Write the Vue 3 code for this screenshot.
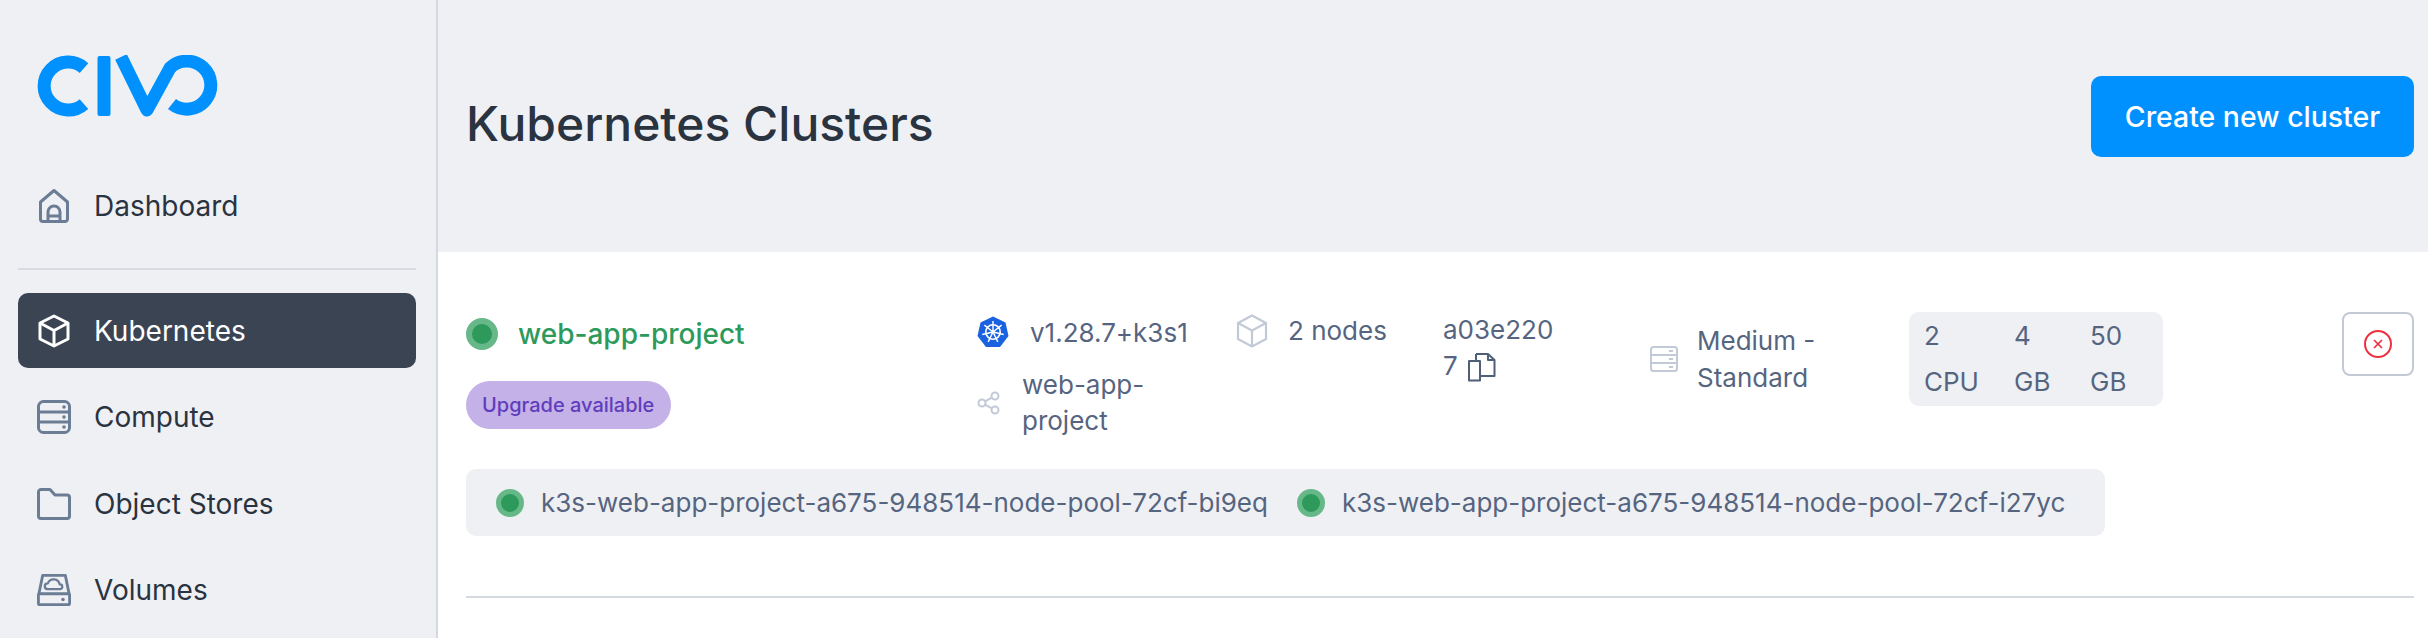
<template>
  <div class="page">
    <aside class="sidebar">
      <div class="logo">
        <svg width="182" height="62" viewBox="37 55 182 62" fill="none" stroke="#0091ff" stroke-width="13">
          <path d="M84 68 A24 24 0 1 0 84 104" />
          <rect x="97.5" y="56" width="13" height="60" rx="2" fill="#0091ff" stroke="none" />
          <path d="M121 57 L147 110 L170 68 A24 24 0 1 1 172 104" stroke-linejoin="round" />
        </svg>
      </div>

      <a class="nav-item">
        <svg class="nav-icon" viewBox="0 0 30 34" fill="none" stroke="#6b7c95" stroke-width="3" stroke-linejoin="round">
          <path d="M1.5 13 L15 1.5 L28.5 13 V30 a2.5 2.5 0 0 1 -2.5 2.5 H4 a2.5 2.5 0 0 1 -2.5 -2.5 Z" />
          <path d="M9 32 V23 a6 6 0 0 1 12 0 V32 M9 27 H21" />
        </svg>
        <span>Dashboard</span>
      </a>

      <div class="nav-divider"></div>

      <a class="nav-item active">
        <svg class="nav-icon" viewBox="0 0 32 34" fill="none" stroke="#fff" stroke-width="3" stroke-linejoin="round">
          <path d="M16 2 L30 9 V25 L16 32 L2 25 V9 Z" />
          <path d="M2 9 L16 16.5 L30 9 M16 16.5 V32" />
        </svg>
        <span>Kubernetes</span>
      </a>
      <a class="nav-item">
        <svg class="nav-icon" viewBox="0 0 34 34" fill="none" stroke="#6b7c95" stroke-width="3">
          <rect x="1.5" y="1.5" width="31" height="31" rx="5" />
          <path d="M1.5 12 H32.5 M1.5 22 H32.5" />
          <circle cx="27" cy="7" r="1.8" fill="#6b7c95" stroke="none" />
          <circle cx="27" cy="17" r="1.8" fill="#6b7c95" stroke="none" />
          <circle cx="27" cy="27" r="1.8" fill="#6b7c95" stroke="none" />
        </svg>
        <span>Compute</span>
      </a>
      <a class="nav-item">
        <svg class="nav-icon" viewBox="0 0 34 32" fill="none" stroke="#6b7c95" stroke-width="3" stroke-linejoin="round">
          <path d="M1.5 4 a2.5 2.5 0 0 1 2.5 -2.5 H13 L18 7 H30 a2.5 2.5 0 0 1 2.5 2.5 V28 a2.5 2.5 0 0 1 -2.5 2.5 H4 a2.5 2.5 0 0 1 -2.5 -2.5 Z" />
        </svg>
        <span>Object Stores</span>
      </a>
      <a class="nav-item">
        <svg class="nav-icon" viewBox="0 0 36 34" fill="none" stroke="#6b7c95" stroke-width="3" stroke-linejoin="round">
          <path d="M2 21 L6 1.5 H30 L34 21" />
          <rect x="1.5" y="21" width="33" height="11.5" rx="1.5" />
          <circle cx="27.5" cy="27" r="1.9" fill="#6b7c95" stroke="none" />
          <path d="M11 16 a3 3 0 0 1 0.5 -6 a6.5 6.5 0 0 1 12.5 1 a2.5 2.5 0 0 1 0.5 5 Z" stroke-width="2.4" />
        </svg>
        <span>Volumes</span>
      </a>
    </aside>

    <main class="main">
      <header class="header">
        <h1>Kubernetes Clusters</h1>
        <button class="btn-create">Create new cluster</button>
      </header>

      <section class="content">
        <div class="cluster-row">
          <div class="col-name">
            <div class="name-line">
              <span class="dot"></span>
              <span class="name">web-app-project</span>
            </div>
            <span class="badge">Upgrade available</span>
          </div>

          <div class="col-version">
            <div class="version-line">
              <svg width="32" height="32" viewBox="0 0 32 32">
                <polygon points="16,0.5 28.5,6.5 31.5,20 23,31 9,31 0.5,20 3.5,6.5" fill="#1a62e0" />
                <g fill="none" stroke="#fff">
                  <circle cx="16" cy="16" r="7.2" stroke-width="1.6" />
                  <circle cx="16" cy="16" r="1.6" fill="#fff" stroke="none" />
                  <path d="M16 16 V5 M16 16 L24.6 9.1 M16 16 L26.7 18.5 M16 16 L20.8 25.9 M16 16 L11.2 25.9 M16 16 L5.3 18.5 M16 16 L7.4 9.1" stroke-width="1.4" />
                </g>
              </svg>
              <span>v1.28.7+k3s1</span>
            </div>
            <div class="project-line">
              <svg width="24" height="24" viewBox="0 0 24 24" fill="none" stroke="#c3cad7" stroke-width="2">
                <circle cx="5" cy="12" r="3.5" />
                <circle cx="18" cy="5" r="3.5" />
                <circle cx="18" cy="19" r="3.5" />
                <path d="M8 10.3 L15 6.7 M8 13.7 L15 17.3" />
              </svg>
              <span class="project-text">web-app-project</span>
            </div>
          </div>

          <div class="col-nodes">
            <svg width="34" height="34" viewBox="0 0 34 34" fill="none" stroke="#c3cad7" stroke-width="2.2" stroke-linejoin="round">
              <path d="M17 1.5 L31 9 V25 L17 32.5 L3 25 V9 Z" />
              <path d="M3 9 L17 16.5 L31 9 M17 16.5 V32.5" />
            </svg>
            <span>2 nodes</span>
          </div>

          <div class="col-id">
            a03e2207
            <svg class="copy" width="30" height="30" viewBox="0 0 30 30" fill="none" stroke="#4f5f78" stroke-width="2" stroke-linejoin="round">
              <path d="M2 9 H13 V28.5 H2 Z" />
              <path d="M13 2 H21 L27.5 8 V24 H13 M21 2 V8 H27.5" />
              <path d="M9 2 H13 M9 2 V9" />
            </svg>
          </div>

          <div class="col-size">
            <svg width="28" height="26" viewBox="0 0 28 26" fill="none" stroke="#c3cad7" stroke-width="2">
              <rect x="1" y="1" width="26" height="24" rx="2.5" />
              <path d="M1 9 H27 M1 17 H27 M19 5 H23 M19 13 H23 M19 21 H23" />
            </svg>
            <span class="size-text">Medium - Standard</span>
          </div>

          <div class="col-specs">
            <div class="specs">
              <div class="spec spec-cpu"><span>2</span><span>CPU</span></div>
              <div class="spec spec-ram"><span>4</span><span>GB</span></div>
              <div class="spec"><span>50</span><span>GB</span></div>
            </div>
          </div>

          <button class="btn-delete">
            <svg width="30" height="30" viewBox="0 0 30 30" fill="none" stroke="#ee2f3f" stroke-width="2">
              <circle cx="15" cy="15" r="13" />
              <path d="M11 11 L19 19 M19 11 L11 19" stroke-width="1.7" />
            </svg>
          </button>
        </div>

        <div class="node-pool">
          <div class="node">
            <span class="dot dot-small"></span>
            <span>k3s-web-app-project-a675-948514-node-pool-72cf-bi9eq</span>
          </div>
          <div class="node">
            <span class="dot dot-small"></span>
            <span>k3s-web-app-project-a675-948514-node-pool-72cf-i27yc</span>
          </div>
        </div>

        <div class="row-divider"></div>
      </section>
    </main>
  </div>
</template>

<script setup>
</script>

<style>
html,
body {
  margin: 0;
  background: #fff;
}
</style>

<style scoped>
.page {
  display: flex;
  height: 638px;
  overflow: hidden;
  font-family: Inter, "Liberation Sans", sans-serif;
  color: #2a3340;
}

/* === Sidebar === */
.sidebar {
  flex-shrink: 0;
  box-sizing: border-box;
  background: #eff0f4;
  border-right: 2px solid #d6d8e0;
  width: 438px;
  padding: 55px 20px 0 18px;
}

.logo {
  height: 62px;
  padding-left: 19px;
  margin-bottom: 51px;
}

.nav-item {
  display: flex;
  align-items: center;
  height: 75px;
  padding-left: 19px;
  font-size: 28px;
  font-weight: 400;
  border-radius: 10px;
  margin-bottom: 11.5px;
}

.nav-icon {
  width: 34px;
  height: 34px;
  margin-right: 23px;
  flex-shrink: 0;
}

.nav-item.active {
  background: #3b4453;
  color: #fff;
}

.nav-divider {
  height: 2px;
  background: #d9dbe3;
  margin: 25px 0 23px;
}

/* === Main === */
.main {
  flex: 1;
  min-width: 0;
}

.header {
  height: 252px;
  box-sizing: border-box;
  background: #eff0f4;
  display: flex;
  align-items: flex-start;
  justify-content: space-between;
  padding: 76px 14px 0 28px;
}

.header h1 {
  margin: 16px 0 0;
  font-size: 48px;
  line-height: 64px;
  font-weight: 500;
  color: #2a3340;
}

.btn-create {
  width: 323px;
  height: 81px;
  background: #0091ff;
  color: #fff;
  border: 0;
  border-radius: 10px;
  font-family: inherit;
  font-size: 28.4px;
  font-weight: 500;
}

.content {
  padding: 60px 14px 0 28px;
  color: #56657f;
  font-size: 26px;
}

.cluster-row {
  display: grid;
  grid-template-columns: 511px 258px 208px 207px 259px 433px 72px;
  height: 157px;
}

/* === Columns === */
.name-line {
  display: flex;
  align-items: center;
  gap: 20px;
  height: 44px;
}

.dot {
  display: block;
  width: 20px;
  height: 20px;
  border-radius: 50%;
  background: #2d9a5b;
  border: 6px solid #66b888;
  flex-shrink: 0;
}

.dot-small {
  width: 18px;
  height: 18px;
  border-width: 5px;
}

.name {
  color: #2d9a5b;
  font-size: 28px;
  font-weight: 500;
}

.badge {
  display: inline-block;
  margin-top: 25px;
  height: 48px;
  line-height: 48px;
  padding: 0 17px 0 16px;
  border-radius: 24px;
  background: #c4b1e8;
  color: #5f3dbb;
  font-size: 20px;
  font-weight: 500;
}

.version-line {
  display: flex;
  align-items: center;
  gap: 21px;
  height: 36px;
  margin-top: 2px;
}

.project-line {
  display: flex;
  align-items: center;
  gap: 21px;
  margin-top: 17px;
}

.project-text {
  width: 150px;
  line-height: 36px;
}

.col-nodes {
  display: flex;
  align-items: flex-start;
  gap: 19px;
  line-height: 34px;
  padding-top: 2px;
}

.col-id {
  width: 120px;
  word-break: break-all;
  line-height: 36px;
}

.copy {
  vertical-align: -7px;
  margin-left: 2px;
}

.col-size {
  display: flex;
  align-items: center;
  align-self: start;
  gap: 19px;
  padding-top: 10px;
}

.size-text {
  width: 180px;
  line-height: 37px;
}

.specs {
  display: flex;
  width: 254px;
  height: 94px;
  box-sizing: border-box;
  background: #eff0f4;
  border-radius: 10px;
  padding: 0 15px;
}

.spec {
  display: flex;
  flex-direction: column;
  justify-content: center;
  gap: 8px;
  line-height: 38px;
}

.spec-cpu {
  width: 90px;
}

.spec-ram {
  width: 76px;
}

.btn-delete {
  width: 72px;
  height: 64px;
  box-sizing: border-box;
  background: #fff;
  border: 2px solid #c3c9d5;
  border-radius: 8px;
  display: flex;
  align-items: center;
  justify-content: center;
  padding: 0;
}

/* === Nodes === */
.node-pool {
  display: flex;
  width: 1639px;
  height: 67px;
  box-sizing: border-box;
  align-items: center;
  background: #eff0f4;
  border-radius: 10px;
  padding-left: 30px;
  font-size: 26px;
}

.node {
  display: flex;
  align-items: center;
  gap: 17px;
  margin-right: 29px;
}

.row-divider {
  height: 2px;
  background: #d5dae1;
  margin-top: 60px;
}
</style>
